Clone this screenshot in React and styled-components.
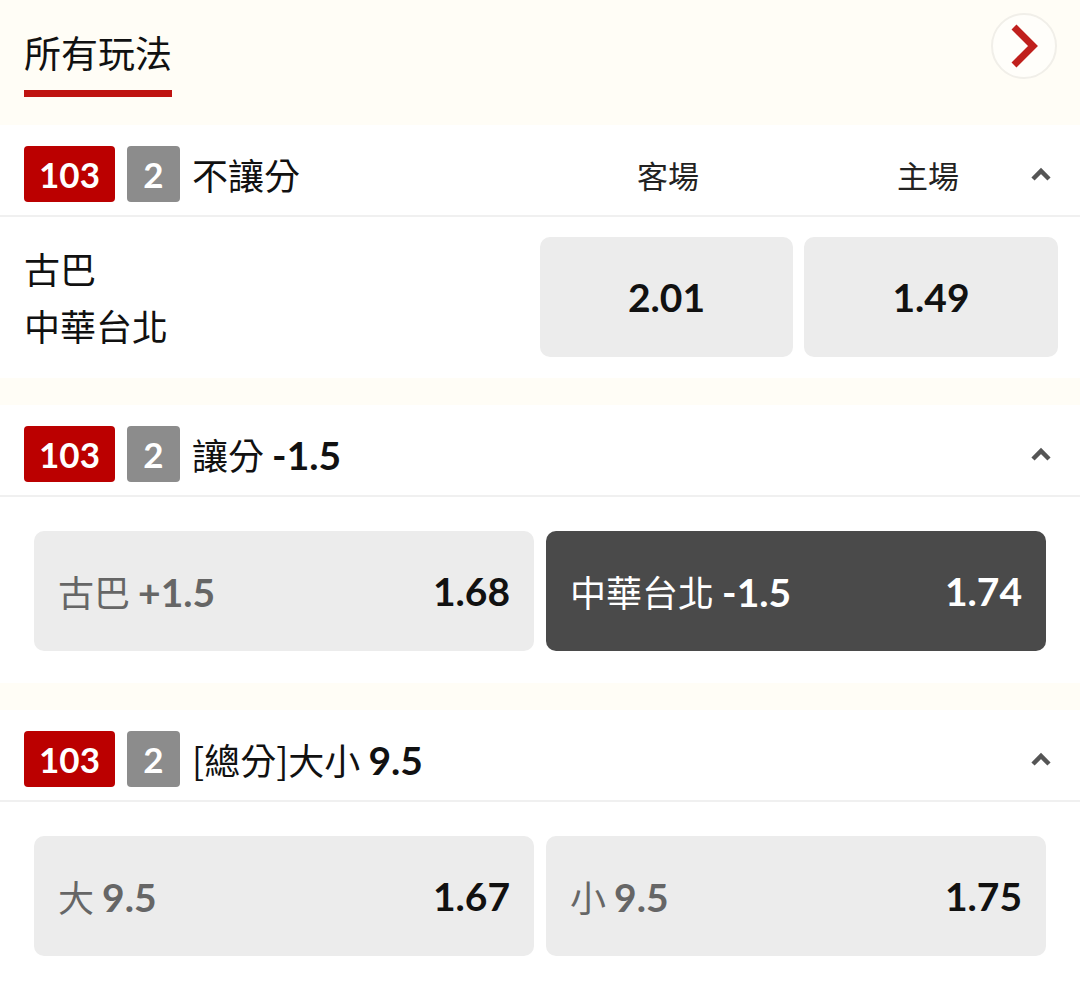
import React from 'react'
import styled, { createGlobalStyle } from 'styled-components'

const GlobalStyle = createGlobalStyle`
  html, body {
    margin: 0;
    padding: 0;
    background: #fffdf6;
    font-family: "Lato", "Noto Sans CJK TC", sans-serif;
    color: #111;
  }
  * { box-sizing: border-box; }
`

const Page = styled.div`
  width: 1080px;
  height: 983px;
  overflow: hidden;
  background: #fffdf6;
`

const TopBar = styled.div`
  height: 125px;
  padding: 0 23px 0 24px;
  display: flex;
  justify-content: space-between;
  align-items: flex-start;
`

const Tab = styled.div`
  padding-top: 26px;
  display: flex;
  flex-direction: column;
  align-items: flex-start;
`

const TabLabel = styled.div`
  font-family: "Noto Sans CJK TC", sans-serif;
  font-size: 37px;
  line-height: 52px;
  color: #111;
`

const TabLine = styled.div`
  margin-top: 12px;
  width: 148px;
  height: 7px;
  background: #bf1411;
`

const NextButton = styled.div`
  margin-top: 13px;
  width: 66px;
  height: 66px;
  border-radius: 50%;
  border: 2px solid #f1efe9;
  background: #fffefa;
  display: flex;
  align-items: center;
  justify-content: center;
`

const Section = styled.section`
  background: #fff;
  margin-bottom: 27px;
`

const SectionHead = styled.div`
  display: flex;
  align-items: center;
  height: 92px;
  padding: 8px 28px 0 24px;
  border-bottom: 2px solid #f0f0f0;
`

const Badge = styled.span`
  height: 56px;
  min-width: ${p => p.$wide ? '91px' : '53px'};
  padding: 0 10px;
  border-radius: 4px;
  background: ${p => p.$tone === 'red' ? '#bb0000' : '#8c8c8c'};
  color: #fff;
  font-family: "Lato", sans-serif;
  font-weight: 700;
  font-size: 35px;
  display: inline-flex;
  align-items: center;
  justify-content: center;
  margin-right: 12px;
`

const MarketTitle = styled.div`
  flex: 1;
  font-family: "Noto Sans CJK TC", sans-serif;
  font-size: 36px;
  line-height: 56px;
  color: #111;
  b {
    font-family: "Lato", sans-serif;
    font-weight: 700;
    font-size: 39px;
    line-height: 1;
  }
`

const HeadCols = styled.div`
  display: flex;
  gap: 60px;
  margin-right: 2px;
`

const HeadCol = styled.div`
  width: 200px;
  text-align: center;
  font-size: 31px;
  color: #222;
  font-family: "Noto Sans CJK TC", sans-serif;
`

const Caret = styled.svg`
  width: 22px;
  height: 16px;
  flex: none;
`

const MatchRow = styled.div`
  display: flex;
  align-items: center;
  padding: 20px 22px 21px 24px;
`

const Teams = styled.div`
  flex: 1;
  display: flex;
  flex-direction: column;
  font-family: "Noto Sans CJK TC", sans-serif;
  font-size: 36px;
  line-height: 57px;
  color: #111;
`

const OddsCells = styled.div`
  display: flex;
  gap: 11px;
`

const OddsCell = styled.div`
  width: ${p => p.$w}px;
  height: 120px;
  border-radius: 10px;
  background: #ececec;
  display: flex;
  align-items: center;
  justify-content: center;
  font-family: "Lato", sans-serif;
  font-weight: 700;
  font-size: 39px;
  color: #111;
`

const PickRow = styled.div`
  display: flex;
  gap: 12px;
  padding: 34px 34px 32px;
`

const Pick = styled.div`
  flex: 1;
  height: 120px;
  border-radius: 10px;
  background: ${p => p.$active ? '#4a4a4a' : '#ececec'};
  display: flex;
  align-items: center;
  justify-content: space-between;
  padding: 0 24px;
`

const PickLabel = styled.span`
  font-family: "Noto Sans CJK TC", sans-serif;
  font-size: 36px;
  color: ${p => p.$active ? '#fff' : '#666'};
  b {
    font-family: "Lato", sans-serif;
    font-weight: 700;
    font-size: 39px;
    line-height: 1;
  }
`

const PickOdds = styled.span`
  font-family: "Lato", sans-serif;
  font-weight: 700;
  font-size: 39px;
  color: ${p => p.$active ? '#fff' : '#111'};
`

const UpCaret = () => (
  <Caret viewBox="0 0 22 16">
    <path d="M3 13 L11 5 L19 13" fill="none" stroke="#555" strokeWidth="4.5" />
  </Caret>
)

const Head = ({ children, cols }) => (
  <SectionHead>
    <Badge $tone="red" $wide>103</Badge>
    <Badge>2</Badge>
    <MarketTitle>{children}</MarketTitle>
    {cols && (
      <HeadCols>
        {cols.map(c => <HeadCol key={c}>{c}</HeadCol>)}
      </HeadCols>
    )}
    <UpCaret />
  </SectionHead>
)

const markets = [
  {
    title: <>讓分 <b>-1.5</b></>,
    picks: [
      { label: '古巴', num: '+1.5', odds: '1.68' },
      { label: '中華台北', num: '-1.5', odds: '1.74', active: true },
    ],
  },
  {
    title: <>[總分]大小 <b>9.5</b></>,
    picks: [
      { label: '大', num: '9.5', odds: '1.67' },
      { label: '小', num: '9.5', odds: '1.75' },
    ],
  },
]

export default function App() {
  return (
    <Page>
      <GlobalStyle />
      <TopBar>
        <Tab>
          <TabLabel>所有玩法</TabLabel>
          <TabLine />
        </Tab>
        <NextButton>
          <svg width="30" height="46" viewBox="0 0 30 46">
            <path d="M5 4 L24 23 L5 42" fill="none" stroke="#c0201c" strokeWidth="7" />
          </svg>
        </NextButton>
      </TopBar>

      <Section>
        <Head cols={['客場', '主場']}>不讓分</Head>
        <MatchRow>
          <Teams>
            <span>古巴</span>
            <span>中華台北</span>
          </Teams>
          <OddsCells>
            <OddsCell $w={253}>2.01</OddsCell>
            <OddsCell $w={254}>1.49</OddsCell>
          </OddsCells>
        </MatchRow>
      </Section>

      {markets.map((m, i) => (
        <Section key={i}>
          <Head>{m.title}</Head>
          <PickRow>
            {m.picks.map(p => (
              <Pick key={p.odds} $active={p.active}>
                <PickLabel $active={p.active}>{p.label} <b>{p.num}</b></PickLabel>
                <PickOdds $active={p.active}>{p.odds}</PickOdds>
              </Pick>
            ))}
          </PickRow>
        </Section>
      ))}
    </Page>
  )
}
